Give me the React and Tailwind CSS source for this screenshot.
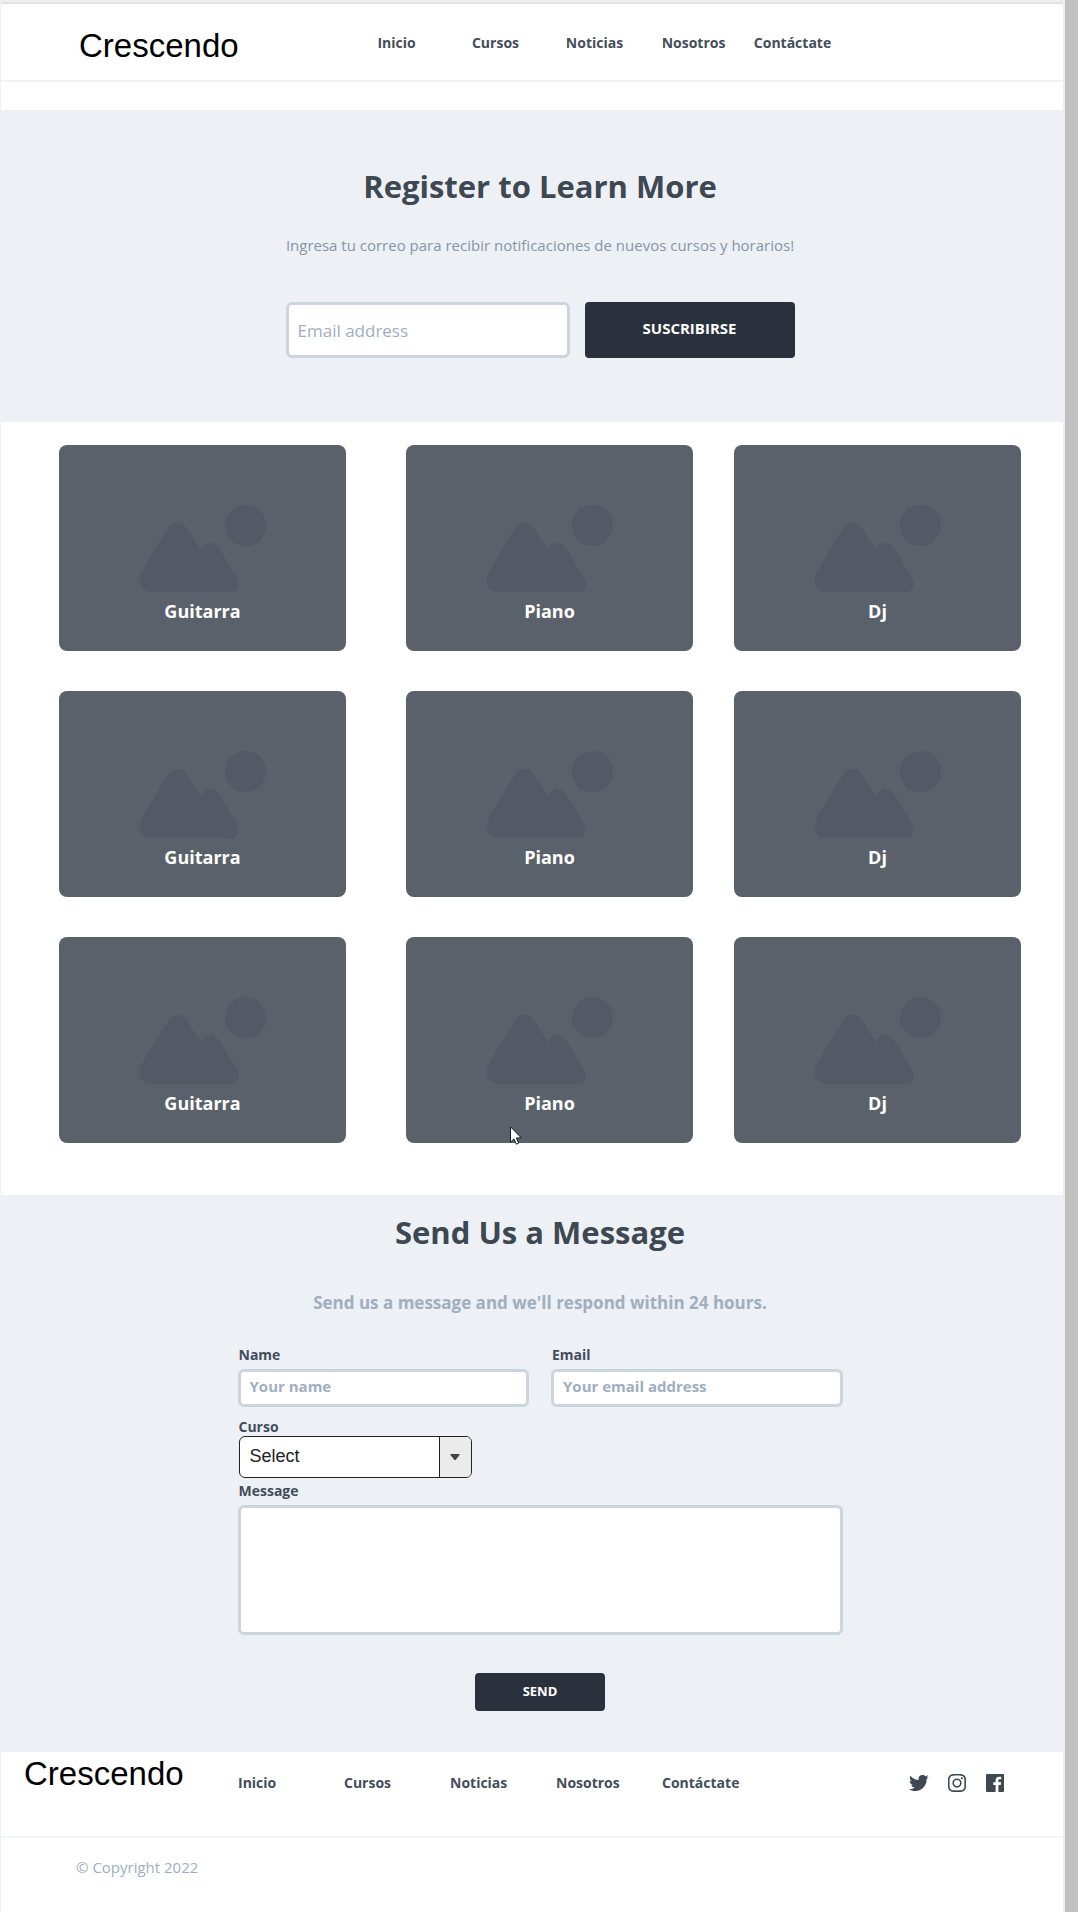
import React from "react";
import {
  BiLogoTwitter,
  BiLogoInstagram,
  BiLogoFacebookSquare,
} from "react-icons/bi";

const links = ["Inicio", "Cursos", "Noticias", "Nosotros", "Contáctate"];

const courses = [
  "Guitarra", "Piano", "Dj",
  "Guitarra", "Piano", "Dj",
  "Guitarra", "Piano", "Dj",
];

const columnPadding = ["pr-[60px]", "pr-[41px]", ""];

const socials = [
  { name: "Twitter", Icon: BiLogoTwitter },
  { name: "Instagram", Icon: BiLogoInstagram },
  { name: "Facebook", Icon: BiLogoFacebookSquare },
];

const fieldClass =
  "block w-full rounded-md border-3 border-[#cbd5e0] bg-white px-[9px] outline-none placeholder:text-[#a0aec0] placeholder:opacity-100";
const labelClass = "block text-sm leading-[18px] font-bold text-[#434d5b]";

function Logo() {
  return (
    <a
      href="#inicio"
      className="font-['Liberation_Sans',Arial,sans-serif] text-[33px] leading-10 text-black"
    >
      Crescendo
    </a>
  );
}

function Placeholder() {
  return (
    <svg
      viewBox="0 0 287 206"
      className="absolute inset-0 h-full w-full"
      fill="#535965"
      aria-hidden="true"
    >
      <path d="M94 147C82 147 77 137 83 126.500L107.500 86C113 75 124 75 129.500 86L141.700 104.500C146 96.500 154.500 95.500 160 103L177.500 132C182.500 140 179 147 171 147Z" />
      <circle cx="186.500" cy="80.500" r="20.700" />
    </svg>
  );
}

function Pointer() {
  return (
    <svg
      viewBox="0 0 12 19"
      className="absolute bottom-[-2px] left-[104px] h-[19px] w-3"
      aria-hidden="true"
    >
      <path
        d="M.5.8V16.200L4 12.900L6.300 18.200L8.700 17.200L6.400 11.900H11.300Z"
        fill="#fff"
        stroke="#15182a"
        strokeWidth="1"
      />
    </svg>
  );
}

function CourseCard({ name, pointer }) {
  return (
    <article className="relative flex h-[206px] flex-col justify-end rounded-lg bg-[#5b616b] pb-7">
      <Placeholder />
      <h3 className="relative text-center text-lg leading-6 font-bold text-white">
        {name}
      </h3>
      {pointer && <Pointer />}
    </article>
  );
}

export default function App() {
  return (
    <div className="flex min-h-screen bg-white font-['Open_Sans',sans-serif] text-[#3d4852]">
      <div className="min-w-0 flex-1 border-l border-[#eef0f2]">
        <div className="h-1 border-b-2 border-[#e2e2e2] bg-[#eeeeee]" />

        <header className="flex h-[78px] items-center border-b-2 border-[#eff2f7] pl-[78px]">
          <div className="w-[268px] pt-2">
            <Logo />
          </div>
          <nav className="grid w-[495px] grid-cols-5 pt-0.5 text-center text-sm font-bold text-[#434d5b]">
            {links.map((l) => (
              <a key={l} href={"#" + l.toLowerCase()}>{l}</a>
            ))}
          </nav>
        </header>

        <main>
          <section className="mt-7 bg-[#edf0f5] pt-14 pb-16 pl-4 text-center">
            <h1 className="text-[31px] leading-10 font-bold">Register to Learn More</h1>
            <p className="mt-[27px] text-[15px] leading-6 text-[#8795a8]">
              Ingresa tu correo para recibir notificaciones de nuevos cursos y horarios!
            </p>
            <form className="mt-[45px] flex justify-center gap-[15px]">
              <div className="w-[284px]">
                <input
                  type="email"
                  aria-label="Email address"
                  placeholder="Email address"
                  className={fieldClass + " h-14 text-[17px]"}
                />
              </div>
              <button
                type="button"
                className="h-14 w-[210px] rounded-sm bg-[#2a313c] pb-1 text-[15px] font-bold text-white"
              >
                SUSCRIBIRSE
              </button>
            </form>
          </section>

          <section className="grid grid-cols-[347fr_328fr_287fr] gap-y-10 pt-[23px] pr-[42px] pb-[52px] pl-[58px]">
            {courses.map((name, i) => (
              <div key={i} className={columnPadding[i % 3]}>
                <CourseCard name={name} pointer={i === 7} />
              </div>
            ))}
          </section>

          <section className="bg-[#edf0f5] pt-[17px] pb-[41px] pl-4">
            <h2 className="text-center text-[31px] leading-10 font-bold">Send Us a Message</h2>
            <p className="mt-[39px] text-center text-[17px] leading-6 font-bold text-[#a0aec0]">
              Send us a message and we'll respond within 24 hours.
            </p>
            <form className="mx-auto mt-[31px] flex w-[605px] flex-col">
              <div className="grid grid-cols-2 gap-x-[22px]">
                <div>
                  <label htmlFor="name" className={labelClass + " mb-[5px] pl-px"}>Name</label>
                  <input
                    id="name"
                    type="text"
                    placeholder="Your name"
                    className={fieldClass + " h-[38px] pb-1 text-[15px] font-bold"}
                  />
                </div>
                <div>
                  <label htmlFor="email" className={labelClass + " mb-[5px] pl-px"}>Email</label>
                  <input
                    id="email"
                    type="email"
                    placeholder="Your email address"
                    className={fieldClass + " h-[38px] pb-1 text-[15px] font-bold"}
                  />
                </div>
              </div>
              <label htmlFor="curso" className={labelClass + " mt-[11px] pl-px"}>Curso</label>
              <div className="relative ml-px h-[42px] w-[233px]">
                <select
                  id="curso"
                  className="h-full w-full appearance-none rounded-md border border-[#222] bg-white pr-10 pb-0.5 pl-2.5 font-['Liberation_Sans',Arial,sans-serif] text-lg text-[#222]"
                >
                  <option>Select</option>
                </select>
                <span className="pointer-events-none absolute inset-y-px right-px flex w-8 items-center justify-center rounded-r-[5px] border-l border-[#222] bg-[#ebebeb]">
                  <svg viewBox="0 0 10 6" className="h-1.5 w-2.5" fill="#444" aria-hidden="true">
                    <path d="M.8 0H9.200Q10.200 0 9.500 1L6 5.400Q5 6.400 4 5.400L.5 1Q-.2 0 .8 0Z" />
                  </svg>
                </span>
              </div>
              <label htmlFor="message" className={labelClass + " mt-1 mb-[5px] pl-px"}>Message</label>
              <textarea id="message" className={fieldClass + " h-[130px] resize-none py-2 text-sm"} />
              <button
                type="button"
                className="mt-[38px] h-[38px] w-[130px] self-center rounded-sm bg-[#2a313c] text-[13px] font-bold text-white"
              >
                SEND
              </button>
            </form>
          </section>
        </main>

        <footer>
          <div className="flex h-[86px] items-start border-b-2 border-[#f3f5f8] pt-0.5 pl-[23px] pr-[56px]">
            <div className="w-[214px]">
              <Logo />
            </div>
            <nav className="grid w-[530px] grid-cols-5 pt-[19px] text-sm font-bold text-[#434d5b]">
              {links.map((l) => (
                <a key={l} href={"#" + l.toLowerCase()}>{l}</a>
              ))}
            </nav>
            <div className="ml-auto flex gap-3.5 pt-[17px]">
              {socials.map(({ name, Icon }) => (
                <a key={name} href={"#" + name.toLowerCase()} aria-label={name}>
                  <Icon className="size-6" />
                </a>
              ))}
            </div>
          </div>
          <p className="mt-[17px] pl-[75px] text-[15px] leading-6 text-[#a0aec0]">
            © Copyright 2022
          </p>
        </footer>
      </div>
      <div className="w-0.5 bg-[#efefef]" />
      <div className="mr-0.5 w-[13px] bg-[#c1c1c1]" />
    </div>
  );
}
